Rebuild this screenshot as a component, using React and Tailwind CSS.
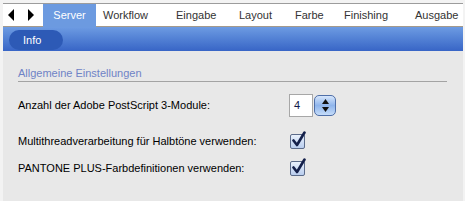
const tabs = [
  { label: "Workflow", w: "w-[73px]" },
  { label: "Eingabe", w: "w-[63px]" },
  { label: "Layout", w: "w-[56px]" },
  { label: "Farbe", w: "w-[49px]" },
  { label: "Finishing", w: "w-[71px]" },
  { label: "Ausgabe", w: "w-[54px]" },
];

function Arrows() {
  return (
    <svg width="40" height="22" viewBox="0 0 40 22">
      <path d="M5 11 L11 5 L11 17 Z" fill="#000" />
      <path d="M31 11 L25 5 L25 17 Z" fill="#000" />
    </svg>
  );
}

function Check() {
  return (
    <span className="relative inline-block w-[15px] h-[15px]">
      <span className="absolute inset-0 rounded-[2px] border border-[#5b6b8a] bg-gradient-to-b from-[#e9f1fc] to-[#b9cdee]" />
      <svg className="absolute left-[1px] top-[-3px]" width="16" height="17" viewBox="0 0 16 17">
        <path d="M2.5 9.5 L6 14 L13.5 1.5" stroke="#14204a" strokeWidth="2.6" fill="none" strokeLinejoin="round" strokeLinecap="round" />
      </svg>
    </span>
  );
}

function Stepper() {
  return (
    <span className="flex flex-col items-center justify-center gap-[3px] w-[22px] h-[21px] rounded-[5px] border border-[#4f6fa8] bg-gradient-to-b from-[#d6e6fb] via-[#8fb5ec] to-[#c5dcf9]">
      <svg width="7" height="5" viewBox="0 0 7 5"><path d="M3.5 0 L7 5 L0 5 Z" fill="#111" /></svg>
      <svg width="7" height="5" viewBox="0 0 7 5"><path d="M0 0 L7 0 L3.5 5 Z" fill="#111" /></svg>
    </span>
  );
}

export default function App() {
  const font = { fontFamily: '"Liberation Sans", Arial, sans-serif' };
  return (
    <div className="w-[465px] h-[201px] bg-[#f3f3f3] pl-[3px] pr-[2px] pt-[3px] flex flex-col text-[11px] whitespace-nowrap overflow-hidden" style={font}>
      {/* Tab row */}
      <div className="flex h-[24px] border-t border-[#9c9c9c] bg-white">
        <div className="w-[40px] flex items-center border-b border-[#a49a8c]">
          <Arrows />
        </div>
        <div className="w-[53px] flex items-center justify-center bg-[#6c9ae0] text-white">Server</div>
        {tabs.map(t => (
          <div key={t.label} className={`${t.w} flex items-center pl-[7px] text-[#333] border-b border-[#a49a8c]`}>
            {t.label}
          </div>
        ))}
        <div className="flex-1 border-b border-[#a49a8c]" />
      </div>

      {/* Blue bar */}
      <div className="h-[24px] bg-gradient-to-b from-[#6d9be2] to-[#3865c6] flex items-end pl-[6px] pb-[1px]">
        <div className="w-[54px] h-[20px] rounded-full bg-[#2d5ab6] text-white flex items-center pl-[14px]">Info</div>
      </div>

      {/* Content */}
      <div className="flex-1 bg-[#e8e8e8] pl-[15px] pr-[16px] pt-[16px] text-black">
        <div className="text-[#6f83c6] border-b border-[#a3a3a3] pb-[1px] leading-[13px]">Allgemeine Einstellungen</div>
        <div className="flex items-center h-[23px] mt-[12px]">
          <span className="w-[271px]">Anzahl der Adobe PostScript 3-Module:</span>
          <span className="w-[24px] h-[23px] bg-white border border-[#a7a7a7] flex items-center pl-[4px] text-[#111a4a]">4</span>
          <span className="ml-[1px]"><Stepper /></span>
        </div>
        <div className="flex items-center h-[15px] mt-[17px]">
          <span className="w-[272px]">Multithreadverarbeitung für Halbtöne verwenden:</span>
          <Check />
        </div>
        <div className="flex items-center h-[15px] mt-[12px]">
          <span className="w-[272px]">PANTONE PLUS-Farbdefinitionen verwenden:</span>
          <Check />
        </div>
      </div>
    </div>
  );
}
